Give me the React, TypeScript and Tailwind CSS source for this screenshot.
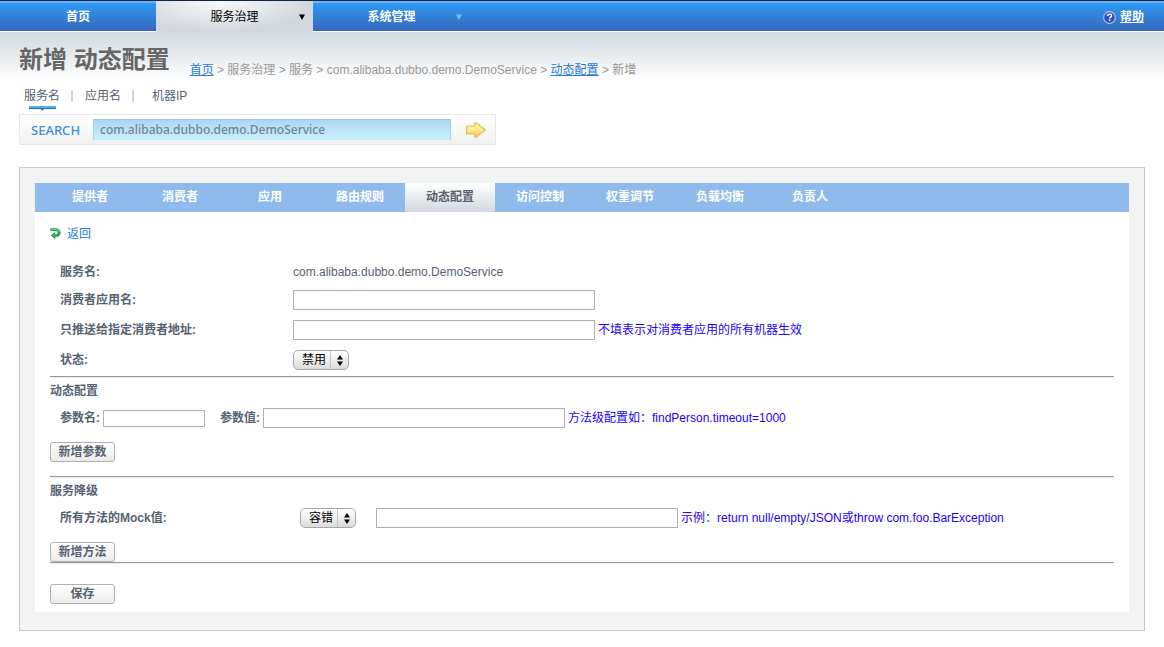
import React, { useState } from 'react';
import clsx from 'clsx';

const serviceName = 'com.alibaba.dubbo.demo.DemoService';

const menus = [
  { label: '首页', caret: false },
  { label: '服务治理', caret: true },
  { label: '系统管理', caret: true },
];

const tabs = ['提供者', '消费者', '应用', '路由规则', '动态配置', '访问控制', '权重调节', '负载均衡', '负责人'];

const searchTypes = ['服务名', '应用名', '机器IP'];

const inputClass = 'h-5 border border-[#b0b0b0] bg-white px-1 text-xs outline-none';
const buttonClass =
  'flex h-5 w-[65px] items-center justify-center rounded-[3px] border border-[#b0b0b0] bg-linear-to-b from-white to-[#ebebeb] font-bold';
const navClass = 'border-t-2 border-b border-t-[#6db5f2] border-b-white bg-linear-to-b from-[#2a9bf5] to-[#3467ba]';

function Caret({ className }: { className?: string }) {
  return (
    <svg className={className} width="6" height="6" viewBox="0 0 6 6" fill="currentColor">
      <path d="M0 0.5h6L3 6z" />
    </svg>
  );
}

function HelpIcon() {
  return (
    <svg width="13" height="13" viewBox="0 0 12 12">
      <circle cx="6" cy="6" r="5.4" fill="#2c4fc0" stroke="#b9c3da" strokeWidth="1.1" />
      <path d="M4.2 4.7c0-1.2.8-1.8 1.9-1.8s1.8.6 1.8 1.500c0 1.200-1.700 1.200-1.800 2.400" fill="none" stroke="#fff" strokeWidth="1.3" />
      <rect x="5.4" y="7.800" width="1.4" height="1.4" fill="#fff" />
    </svg>
  );
}

function BackIcon() {
  return (
    <svg width="11" height="12" viewBox="0 0 11 12">
      <path d="M.3 1.700H6.200a2.900 2.900 0 0 1 0 5.900H4.500" fill="none" stroke="#1f9d47" strokeWidth="2.800" />
      <path d="M5.300 3.900v7.300L.8 7.600z" fill="#1f9d47" />
      <path d="M.8 1.500H6.200a2.900 2.900 0 0 1 2.900 2.600" fill="none" stroke="#62d68a" strokeWidth="1.100" />
      <path d="M7 7.300H3" fill="none" stroke="#45c46f" strokeWidth="1.200" />
    </svg>
  );
}

function ArrowIcon() {
  return (
    <svg width="20" height="16" viewBox="0 0 20 16">
      <defs>
        <linearGradient id="arrow" x1="0" y1="0" x2="0" y2="1">
          <stop offset="0" stopColor="#fffcb0" />
          <stop offset=".5" stopColor="#ffe98a" />
          <stop offset="1" stopColor="#ffb469" />
        </linearGradient>
      </defs>
      <path d="M.7 4h8.100V.9h1.400L19.300 8l-9.100 7.100H8.800V12H.7z" fill="url(#arrow)" stroke="#e3bb4c" strokeWidth="1.200" strokeLinejoin="round" />
    </svg>
  );
}

// 下拉框，右侧为上下箭头
function Select({ id, label, options }: { id: string; label?: string; options: string[] }) {
  return (
    <div className="relative">
      <select
        id={id}
        aria-label={label}
        className="block h-5 w-14 appearance-none rounded-[5px] border border-[#a8a8a8] bg-linear-to-b from-white to-[#dcdcdc] pl-2 text-xs leading-4 text-black outline-none"
      >
        {options.map((option) => (
          <option key={option}>{option}</option>
        ))}
      </select>
      <div className="pointer-events-none absolute inset-y-px right-px flex w-[18px] items-center justify-center rounded-r-[4px] border-l border-[#c4c4c4]">
        <svg width="6" height="11" viewBox="0 0 6 11">
          <path d="M3 0l3 4.500H0zM0 6.500h6L3 11z" />
        </svg>
      </div>
    </div>
  );
}

function Divider() {
  return <hr className="h-[2px] border-t border-b border-t-[#999] border-b-[#eee]" />;
}

function Row({ id, label, children }: { id?: string; label: string; children: React.ReactNode }) {
  return (
    <div className="flex items-center pl-2.5">
      {id ? (
        <label htmlFor={id} className="w-[233px] shrink-0 font-bold">{label}</label>
      ) : (
        <span className="w-[233px] shrink-0 font-bold">{label}</span>
      )}
      {children}
    </div>
  );
}

function App() {
  const [activeMenu, setActiveMenu] = useState('服务治理');
  const [activeTab, setActiveTab] = useState('动态配置');
  const [searchType, setSearchType] = useState('服务名');
  const [keyword, setKeyword] = useState(serviceName);

  return (
    <div className="min-h-screen bg-white font-['Liberation_Sans','Noto_Sans_CJK_SC',sans-serif] text-xs leading-5 text-[#566270]">
      {/* 顶部导航 */}
      <nav className="flex h-8 border-t border-[#0b2447]">
        {menus.map(({ label, caret }) => (
          <button
            key={label}
            onClick={() => setActiveMenu(label)}
            className={clsx(
              'grid w-[157px] grid-cols-[1fr_auto_1fr] items-center first:w-[156px]',
              activeMenu === label
                ? 'bg-[radial-gradient(ellipse_at_40%_0%,#f8f9fb,#d3d8de_70%)] pt-px text-black'
                : clsx(navClass, 'font-bold text-white')
            )}
          >
            <span className="col-start-2">{label}</span>
            {caret && (
              <Caret className={clsx('mr-2 justify-self-end', activeMenu === label ? 'text-black' : 'text-[#7cc0fa]')} />
            )}
          </button>
        ))}
        <div className={clsx(navClass, 'flex grow items-center justify-end gap-1 pr-5 text-white')}>
          <HelpIcon />
          <a href="#help" className="font-bold underline">帮助</a>
        </div>
      </nav>

      <header className="bg-linear-to-b from-[#d2d9df] to-white to-[48px] px-[19px]">
        <div className="flex items-end gap-5 pt-2">
          <h1 className="text-2xl leading-10 font-bold text-[#666]">新增 动态配置</h1>
          <div className="text-[#999]">
            <a href="#home" className="text-[#267ad8] underline">首页</a> &gt; 服务治理 &gt; 服务 &gt; {serviceName} &gt;{' '}
            <a href="#overrides" className="text-[#267ad8] underline">动态配置</a> &gt; 新增
          </div>
        </div>

        {/* 搜索 */}
        <div className="mt-1.5 flex h-7 pl-[5px]">
          {searchTypes.map((type, i) => (
            <div key={type} className="flex">
              {i > 0 && <span className="mt-1 ml-[11px] h-3 w-[2px] bg-[#d2d4da]" />}
              <button
                onClick={() => setSearchType(type)}
                className={clsx('flex flex-col items-center', i === 1 && 'ml-3', i === 2 && 'ml-[18px]')}
              >
                {type}
                {searchType === type && (
                  <svg width="27" height="5" viewBox="0 0 27 5">
                    <path d="M0 0h27v2H0z" fill="#55b0f5" />
                    <path d="M0 2h27v1H0zM12 3h3l-1.500 2z" fill="#2468a8" />
                  </svg>
                )}
              </button>
            </div>
          ))}
        </div>
      </header>

      <form
        onSubmit={(e) => e.preventDefault()}
        className="ml-[19px] flex h-[31px] w-[477px] items-center border border-[#e6e8ea] bg-linear-to-b from-white to-[#f1f1f1] font-['Noto_Sans',sans-serif] text-[13px]"
      >
        <label htmlFor="keyword" className="w-[73px] pl-[11px] font-medium text-[#3b8fe8]">SEARCH</label>
        <input
          id="keyword"
          value={keyword}
          onChange={(e) => setKeyword(e.target.value)}
          className="h-[21px] w-[358px] border border-t-[#9dc3df] border-r-[#a5d0e6] border-b-[#c4ecfd] border-l-[#a5d0e6] bg-linear-to-b from-[#acd5f2] to-[#c9f0ff] px-1.5 text-xs font-medium text-[#718595] outline-none"
        />
        <button type="submit" aria-label="搜索" className="ml-[15px]">
          <ArrowIcon />
        </button>
      </form>

      {/* 主面板 */}
      <main className="mx-[19px] mt-[22px] border border-[#c9c9c9] bg-[#f2f4f4] px-[15px] pt-[15px] pb-[18px]">
        <div className="bg-white">
          <div className="flex h-[29px] bg-[#8ebbec] pl-2.5">
            {tabs.map((tab) => (
              <button
                key={tab}
                onClick={() => setActiveTab(tab)}
                className={clsx(
                  'w-[90px] pb-0.5 font-bold',
                  activeTab === tab ? 'bg-linear-to-b from-white to-[#d3d7de]' : 'text-white'
                )}
              >
                {tab}
              </button>
            ))}
          </div>

          <form onSubmit={(e) => e.preventDefault()} className="px-[15px] pt-3 pb-2">
            <a href="#back" className="flex items-center gap-1.5 text-[#267ad8]">
              <BackIcon />
              返回
            </a>

            <div className="pt-[18px]">
              <Row label="服务名:">{serviceName}</Row>
            </div>
            <div className="flex flex-col gap-2.5 pt-2 pb-1.5">
              <Row id="application" label="消费者应用名:">
                <input id="application" className={clsx(inputClass, 'w-[302px]')} />
              </Row>
              <Row id="address" label="只推送给指定消费者地址:">
                <input id="address" className={clsx(inputClass, 'mr-[3px] w-[302px]')} />
                <span className="text-[#2200ff]">不填表示对消费者应用的所有机器生效</span>
              </Row>
              <Row id="enabled" label="状态:">
                <Select id="enabled" options={['禁用', '启用']} />
              </Row>
            </div>

            <Divider />
            <h2 className="mt-[3px] font-bold">动态配置</h2>
            <div className="mt-[7px] flex items-center pl-2.5">
              <label htmlFor="paramKey" className="mr-[3px] font-bold">参数名:</label>
              <input id="paramKey" className="mr-[15px] h-[17px] w-[102px] border border-[#b0b0b0] px-1 outline-none" />
              <label htmlFor="paramValue" className="mr-[3px] font-bold">参数值:</label>
              <input id="paramValue" className={clsx(inputClass, 'mr-[3px] w-[302px]')} />
              <span className="text-[#2200ff]">方法级配置如：findPerson.timeout=1000</span>
            </div>
            <button type="button" className={clsx(buttonClass, 'my-3.5')}>新增参数</button>

            <Divider />
            <h2 className="mt-[3px] font-bold">服务降级</h2>
            <div className="mt-[7px]">
              <Row id="mockValue" label="所有方法的Mock值:">
                <div className="mr-5 ml-[7px]">
                  <Select id="mockMethod" label="Mock方式" options={['容错', '屏蔽']} />
                </div>
                <input id="mockValue" className={clsx(inputClass, 'mr-[3px] w-[302px]')} />
                <span className="text-[#2200ff]">示例：return null/empty/JSON或throw com.foo.BarException</span>
              </Row>
            </div>
            <button type="button" className={clsx(buttonClass, 'mt-3.5')}>新增方法</button>

            <Divider />
            <button type="submit" className={clsx(buttonClass, 'mt-5')}>保存</button>
          </form>
        </div>
      </main>
    </div>
  );
}

export default App;
